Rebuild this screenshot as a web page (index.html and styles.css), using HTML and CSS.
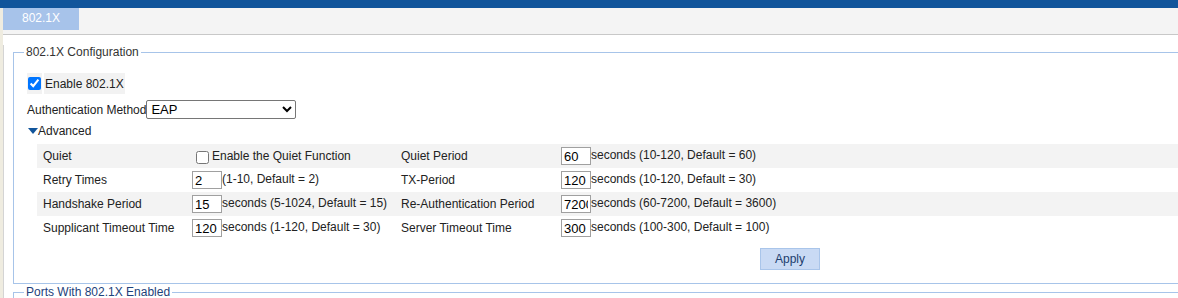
FILE: index.html
```html
<!DOCTYPE html>
<html lang="en">
<head>
    <meta charset="UTF-8">
    <title>802.1X</title>
    <link rel="stylesheet" href="styles.css">
</head>
<body>

<!--top bar-->
<div class="topbar"></div>

<div class="frame">

    <!--tabs-->
    <div class="tabs">
        <div class="tab">802.1X</div>
    </div>

    <div class="content">

        <!--802.1X configuration-->
        <fieldset class="box">
            <legend class="box-title">802.1X Configuration</legend>

            <table class="enable">
                <tr>
                    <td><input type="checkbox" checked></td>
                    <td>Enable 802.1X</td>
                </tr>
            </table>

            <div class="auth">
                Authentication Method<select class="auth-select">
                    <option>EAP</option>
                    <option>PAP</option>
                    <option>CHAP</option>
                </select>
            </div>

            <div class="advanced"><span class="tri"></span>Advanced</div>

            <table class="adv">
                <colgroup>
                    <col class="c1">
                    <col class="c2">
                    <col class="c3">
                    <col>
                </colgroup>
                <tr class="odd">
                    <td>Quiet</td>
                    <td><label><input type="checkbox" class="cb">Enable the Quiet Function</label></td>
                    <td>Quiet Period</td>
                    <td><input class="num" type="text" value="60">seconds (10-120, Default = 60)</td>
                </tr>
                <tr>
                    <td>Retry Times</td>
                    <td><input class="num" type="text" value="2">(1-10, Default = 2)</td>
                    <td>TX-Period</td>
                    <td><input class="num" type="text" value="120">seconds (10-120, Default = 30)</td>
                </tr>
                <tr class="odd">
                    <td>Handshake Period</td>
                    <td><input class="num" type="text" value="15">seconds (5-1024, Default = 15)</td>
                    <td>Re-Authentication Period</td>
                    <td><input class="num" type="text" value="7200">seconds (60-7200, Default = 3600)</td>
                </tr>
                <tr>
                    <td>Supplicant Timeout Time</td>
                    <td><input class="num" type="text" value="120">seconds (1-120, Default = 30)</td>
                    <td>Server Timeout Time</td>
                    <td><input class="num" type="text" value="300">seconds (100-300, Default = 100)</td>
                </tr>
            </table>

            <div class="actions">
                <button class="btn">Apply</button>
            </div>
        </fieldset>

        <!--ports-->
        <fieldset class="box ports">
            <legend class="box-title">Ports With 802.1X Enabled</legend>
        </fieldset>

    </div>
</div>

</body>
</html>
```

FILE: styles.css
```css
* {
    margin: 0;
    padding: 0;
    box-sizing: border-box;
}

body {
    font: 12px "Liberation Sans", Arial, sans-serif;
    color: #222;
    background: #fff;
    overflow: hidden;
}

/*top bar*/
.topbar {
    height: 8px;
    background-color: #11559b;
}

/*left strip*/
.frame {
    border-left: 3px solid #efece0;
    min-height: 290px;
}

.tabs {
    height: 27px;
    background-color: #f4f4f4;
    border-bottom: 1px solid #c8c8c8;
}

.tab {
    width: 76px;
    height: 22px;
    line-height: 20px;
    text-align: center;
    color: #fff;
    background-color: #a7c3ea;
}

.content {
    border-left: 1px solid #d4d4d4;
    padding-left: 9px;
}

/*fieldset*/
.box {
    border: 1px solid #a7c4e9;
    border-right: none;
    margin-top: 10px;
    margin-right: -20px;
    padding: 12px 0 13px 13px;
}

.box-title {
    margin-left: -3px;
    padding: 0 2px;
    line-height: 14px;
    color: #333;
}

.ports {
    margin-top: 1px;
    padding: 0 0 0 13px;
    height: 20px;
}

.ports .box-title {
    color: #1d427a;
}

/*enable*/
.enable {
    border-spacing: 2px;
    margin-left: -2px;
}

.enable td {
    height: 21px;
    padding: 1px;
    background-color: #f2f2f2;
}

.enable input {
    display: block;
}

.auth {
    display: flex;
    align-items: center;
    margin-top: 4px;
    height: 19px;
}

.auth-select {
    width: 150px;
    height: 19px;
    font: 13px "Liberation Sans", Arial, sans-serif;
    color: #000;
    border: 1px solid #767676;
    border-radius: 2px;
    background: #fff;
}

.advanced {
    display: flex;
    align-items: center;
    margin-top: 4px;
    height: 16px;
}

.tri {
    width: 0;
    height: 0;
    margin: 0 0 0 1px;
    border-left: 5px solid transparent;
    border-right: 5px solid transparent;
    border-top: 6px solid #11559b;
}

/*advanced table*/
.adv {
    width: calc(100% + 20px);
    margin-top: 5px;
    margin-left: 10px;
    border-collapse: collapse;
    table-layout: fixed;
}

.adv .c1 {
    width: 149px;
}

.adv .c2 {
    width: 209px;
}

.adv .c3 {
    width: 160px;
}

.adv td {
    height: 24px;
    padding: 0 6px;
    white-space: nowrap;
}

.adv .odd td {
    background-color: #f3f3f3;
}

.adv label {
    display: flex;
    align-items: center;
}

.cb {
    margin: 3px 3px 1px 4px;
}

.num {
    width: 30px;
    height: 18px;
    padding: 0 2px;
    border: 1px solid #a0a0a0;
    font: 13px "Liberation Sans", Arial, sans-serif;
    color: #000;
    vertical-align: middle;
}

/*apply*/
.actions {
    margin-top: 8px;
    padding-left: 733px;
}

.btn {
    width: 60px;
    height: 22px;
    font: 12px "Liberation Sans", Arial, sans-serif;
    color: #1c3d6e;
    background-color: #c9daf4;
    border: 1px solid #a9c5ea;
}
```
